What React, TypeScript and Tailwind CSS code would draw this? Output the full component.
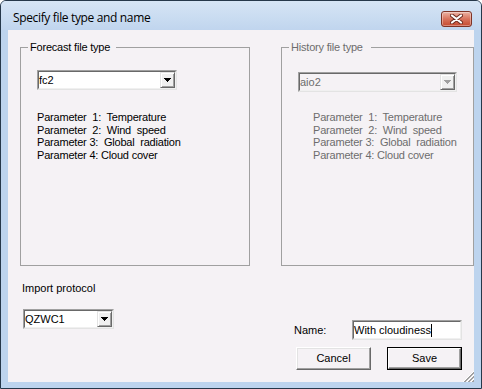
import React from "react";

function Arrow({ color }: { color: string }) {
  return (
    <svg width="7" height="4" viewBox="0 0 7 4" shapeRendering="crispEdges">
      <rect x="0" y="0" width="7" height="1" fill={color} />
      <rect x="1" y="1" width="5" height="1" fill={color} />
      <rect x="2" y="2" width="3" height="1" fill={color} />
      <rect x="3" y="3" width="1" height="1" fill={color} />
    </svg>
  );
}

function Combo({ className, text, disabled }: { className: string; text: string; disabled?: boolean }) {
  return (
    <div
      className={`flex h-[20px] border border-t-[#a0a0a0] border-l-[#a0a0a0] border-b-[#e3e3e3] border-r-[#e3e3e3] ${className}`}
    >
      <div
        className={`flex min-w-0 flex-1 border border-t-[#696969] border-l-[#696969] border-b-[#f0f0f0] border-r-[#f0f0f0] ${
          disabled ? "bg-[#f5f2f5]" : "bg-white"
        }`}
      >
        <span className={`flex-1 text-[11px] leading-[16px] ${disabled ? "text-[#6d6d6d]" : "text-black"}`}>{text}</span>
        <div className="flex h-[16px] w-[15px] items-center justify-center border border-t-[#e3e3e3] border-l-[#e3e3e3] border-b-[#696969] border-r-[#696969] bg-[#f0f0f0] shadow-[inset_1px_1px_#ffffff,inset_-1px_-1px_#a0a0a0]">
          <Arrow color={disabled ? "#a0a0a0" : "#000000"} />
        </div>
      </div>
    </div>
  );
}

function Params({ className }: { className: string }) {
  const lines = [
    "Parameter  1:  Temperature",
    "Parameter  2:  Wind  speed",
    "Parameter 3:  Global  radiation",
    "Parameter 4: Cloud cover",
  ];
  return (
    <div className={`whitespace-pre text-[11px] leading-[12.5px] tracking-[-0.2px] ${className}`}>
      {lines.map((l) => (
        <div key={l}>{l}</div>
      ))}
    </div>
  );
}

export default function App() {
  return (
    <div className="h-[389px] w-[482px] bg-white font-['Liberation_Sans',Arial,sans-serif]">
      <div className="flex h-[389px] w-[482px] flex-col rounded-t-[6px] border border-[#26384a] bg-[#bdd4ee]">
        {/* Title bar */}
        <div className="flex h-[29px] items-start rounded-t-[5px] bg-linear-to-b from-[#d6e5f5] to-[#c0d5ee]">
          <span className="pl-[12px] pt-[9px] font-['Open_Sans',sans-serif] text-[12px] leading-[16px] tracking-[-0.35px] text-black">
            Specify file type and name
          </span>
          <div className="ml-auto mr-[9px] mt-[10px] flex h-[16px] w-[31px] items-center justify-center rounded-[3px] border border-[#7e3326] bg-linear-to-b from-[#eab2a4] via-[#d8735d] to-[#c5492f] shadow-[inset_0_0_0_1px_rgba(255,255,255,0.35)]">
            <svg width="13" height="10" viewBox="0 0 13 10">
              <path d="M2 1.5 L11 8.5 M11 1.5 L2 8.5" stroke="#6b2a1f" strokeWidth="4" strokeLinecap="round" />
              <path d="M2 1.5 L11 8.5 M11 1.5 L2 8.5" stroke="#ffffff" strokeWidth="2.2" strokeLinecap="round" />
            </svg>
          </div>
        </div>

        {/* Client area */}
        <div className="flex-1 px-[7px] pb-[6px]">
          <div className="relative flex h-full flex-col bg-[#f5f2f5] text-black">
            {/* Group boxes */}
            <div className="mt-[17px] flex">
              <div className="relative ml-[12px] h-[219px] w-[230px] border border-[#a0a0a0] pl-[16px] pt-[22px]">
                <span className="absolute left-[7px] top-[-7px] bg-[#f5f2f5] pl-[2px] pr-[6px] text-[11px] leading-[13px] tracking-[-0.2px]">
                  Forecast file type
                </span>
                <Combo className="w-[140px]" text="fc2" />
                <Params className="mt-[21px]" />
              </div>
              <div className="relative ml-[31px] h-[219px] w-[193px] border border-[#a0a0a0] pl-[16px] pt-[24px]">
                <span className="absolute left-[7px] top-[-7px] bg-[#f5f2f5] pl-[2px] pr-[8px] text-[11px] leading-[13px] tracking-[-0.2px] text-[#6d6d6d]">
                  History file type
                </span>
                <Combo className="w-[159px]" text="aio2" disabled />
                <Params className="ml-[15px] mt-[19px] text-[#6d6d6d]" />
              </div>
            </div>

            {/* Bottom area */}
            <div className="flex">
              <div className="ml-[14px] mt-[16px] flex flex-col">
                <span className="text-[11px] leading-[13px]">Import protocol</span>
                <Combo className="ml-[1px] mt-[14px] w-[91px]" text="QZWC1" />
              </div>
              <div className="ml-auto mr-[12px] mt-[54px] flex w-[168px] flex-col">
                <div className="flex h-[20px] items-center">
                  <span className="text-[11px] leading-[13px]">Name:</span>
                  <div className="ml-auto flex h-[20px] w-[110px] border border-t-[#a0a0a0] border-l-[#a0a0a0] border-b-[#e3e3e3] border-r-[#e3e3e3]">
                    <div className="flex flex-1 items-center border border-t-[#696969] border-l-[#696969] border-b-[#f0f0f0] border-r-[#f0f0f0] bg-white">
                      <span className="text-[11px] leading-[16px]">With cloudiness</span>
                      <span className="h-[13px] w-[1px] bg-black" />
                    </div>
                  </div>
                </div>
                <div className="mt-[7px] flex gap-[16px] pl-[2px]">
                  <div className="flex h-[23px] w-[75px] items-center justify-center border border-t-white border-l-white border-b-[#696969] border-r-[#696969] bg-[#f5f2f5] pb-[1px] text-[11px] leading-[13px] shadow-[inset_-1px_-1px_#a0a0a0,inset_1px_1px_#e3e3e3]">
                    Cancel
                  </div>
                  <div className="h-[23px] w-[75px] border border-black">
                    <div className="flex h-full items-center justify-center border border-t-white border-l-white border-b-[#696969] border-r-[#696969] bg-[#f5f2f5] text-[11px] leading-[13px] shadow-[inset_-1px_-1px_#a0a0a0]">
                      Save
                    </div>
                  </div>
                </div>
              </div>
            </div>

            {/* Size grip */}
            <svg className="absolute bottom-0 right-0" width="12" height="12" viewBox="0 0 12 12">
              <path d="M12 1 L1 12" stroke="#ffffff" strokeWidth="1" />
              <path d="M12 2 L2 12 M12 3 L3 12" stroke="#a0a0a0" strokeWidth="1" />
              <path d="M12 5 L5 12" stroke="#ffffff" strokeWidth="1" />
              <path d="M12 6 L6 12 M12 7 L7 12" stroke="#a0a0a0" strokeWidth="1" />
              <path d="M12 9 L9 12" stroke="#ffffff" strokeWidth="1" />
              <path d="M12 10 L10 12 M12 11 L11 12" stroke="#a0a0a0" strokeWidth="1" />
            </svg>
          </div>
        </div>
      </div>
    </div>
  );
}
